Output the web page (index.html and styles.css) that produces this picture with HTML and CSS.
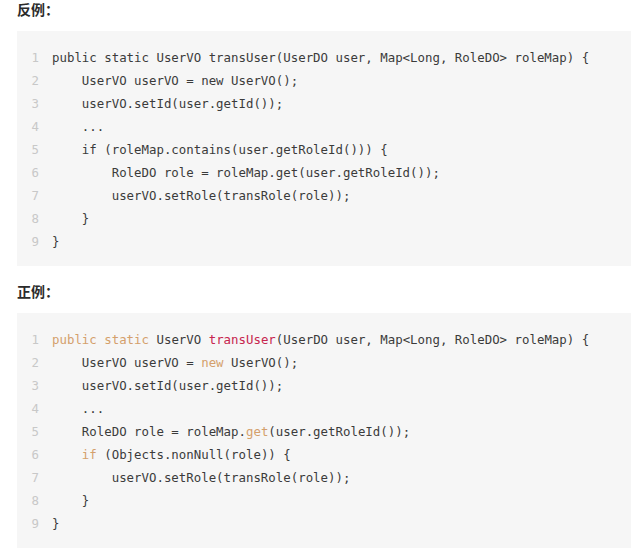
FILE: index.html
```html
<!DOCTYPE html>
<html lang="zh">
<head>
<meta charset="utf-8">
<link rel="stylesheet" href="styles.css">
</head>
<body>
<main class="page">
  <h4 class="title">反例：</h4>
  <div class="code">
    <div class="ln">1</div><div class="src">public static UserVO transUser(UserDO user, Map&lt;Long, RoleDO&gt; roleMap) {</div>
    <div class="ln">2</div><div class="src">    UserVO userVO = new UserVO();</div>
    <div class="ln">3</div><div class="src">    userVO.setId(user.getId());</div>
    <div class="ln">4</div><div class="src">    ...</div>
    <div class="ln">5</div><div class="src">    if (roleMap.contains(user.getRoleId())) {</div>
    <div class="ln">6</div><div class="src">        RoleDO role = roleMap.get(user.getRoleId());</div>
    <div class="ln">7</div><div class="src">        userVO.setRole(transRole(role));</div>
    <div class="ln">8</div><div class="src">    }</div>
    <div class="ln">9</div><div class="src">}</div>
  </div>
  <h4 class="title">正例：</h4>
  <div class="code">
    <div class="ln">1</div><div class="src"><span class="kw">public</span> <span class="kw">static</span> UserVO <span class="fn">transUser</span>(UserDO user, Map&lt;Long, RoleDO&gt; roleMap) {</div>
    <div class="ln">2</div><div class="src">    UserVO userVO = <span class="kw">new</span> UserVO();</div>
    <div class="ln">3</div><div class="src">    userVO.setId(user.getId());</div>
    <div class="ln">4</div><div class="src">    ...</div>
    <div class="ln">5</div><div class="src">    RoleDO role = roleMap.<span class="kw">get</span>(user.getRoleId());</div>
    <div class="ln">6</div><div class="src">    <span class="kw">if</span> (Objects.nonNull(role)) {</div>
    <div class="ln">7</div><div class="src">        userVO.setRole(transRole(role));</div>
    <div class="ln">8</div><div class="src">    }</div>
    <div class="ln">9</div><div class="src">}</div>
  </div>
</main>
</body>
</html>
```
FILE: styles.css
```css
html, body {
  margin: 0;
  padding: 0;
  background: #ffffff;
}
.page {
  padding: 0 9px 0 17px;
}
.title {
  margin: 0 0 13px 0;
  font-family: "Noto Sans CJK SC", "Noto Sans", sans-serif;
  font-size: 14px;
  font-weight: 700;
  line-height: 18px;
  color: #2b2b2b;
}
.code {
  display: grid;
  grid-template-columns: 8px 1fr;
  column-gap: 13px;
  background: #f6f6f6;
  padding: 15px 8px 13px 14px;
  margin-bottom: 16px;
  font-family: "DejaVu Sans Mono", "Liberation Mono", monospace;
  font-size: 12.4px;
  line-height: 23px;
  color: #3b3b3b;
}
.ln {
  text-align: right;
  color: #c8c8c8;
}
.src {
  white-space: pre;
}
.kw {
  color: #d4a06c;
}
.fn {
  color: #c7254e;
}
```
